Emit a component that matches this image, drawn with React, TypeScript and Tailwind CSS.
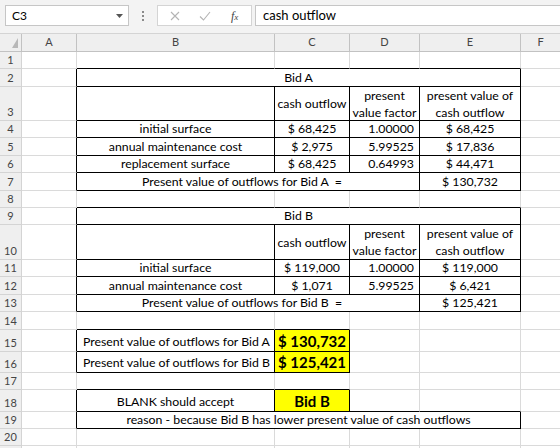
import type { ReactNode } from "react";

const A = "w-[55px]";
const B = "w-[198px]";
const C = "w-[75px]";
const D = "w-[70px]";
const E = "w-[101px]";
const BE = "w-[444px]";
const BD = "w-[343px]";

// right / bottom borders of a boxed range
const br = "border-r-black";
const bb = "border-b-black";
const box = "border-r-black border-b-black";

function Cell({
  w,
  className = "",
  align = "items-end pb-[1px]",
  children,
}: {
  w: string;
  className?: string;
  align?: string;
  children?: ReactNode;
}) {
  return (
    <div
      className={`flex shrink-0 overflow-hidden whitespace-nowrap border-r border-b border-[#dadada] leading-[15px] ${align} ${w} ${className}`}
    >
      {children}
    </div>
  );
}

function Row({ n, h, children }: { n?: number; h: string; children?: ReactNode }) {
  return (
    <div className={`flex ${h}`}>
      <div className="flex w-[22px] shrink-0 items-end justify-center border-r border-b border-[#d4d4d4] bg-[#efefef] pb-[1px] text-[11px] leading-[14px] text-[#444]">
        {n}
      </div>
      {children}
      <div className="flex-1 border-b border-[#dadada]" />
    </div>
  );
}

function TwoLine({ a, b }: { a: string; b: string }) {
  return (
    <div className="flex flex-col items-center leading-[17px]">
      <span>{a}</span>
      <span>{b}</span>
    </div>
  );
}

function BidHeader() {
  return (
    <>
      <Cell w={A} className={br} />
      <Cell w={B} className={box} />
      <Cell w={C} className={`${box} justify-center`} align="items-center">
        cash outflow
      </Cell>
      <Cell w={D} className={`${box} justify-center`} align="items-center">
        <TwoLine a="present" b="value factor" />
      </Cell>
      <Cell w={E} className={`${box} justify-center`} align="items-center">
        <TwoLine a="present value of" b="cash outflow" />
      </Cell>
    </>
  );
}

function DataRow({
  label,
  cash,
  factor,
  pv,
}: {
  label: string;
  cash: string;
  factor: string;
  pv: string;
}) {
  return (
    <>
      <Cell w={A} className={br} />
      <Cell w={B} className={`${box} justify-center`}>
        {label}
      </Cell>
      <Cell w={C} className={`${box} justify-center`}>
        {cash}
      </Cell>
      <Cell w={D} className={`${box} justify-end pr-[5px]`}>
        {factor}
      </Cell>
      <Cell w={E} className={`${box} justify-center`}>
        {pv}
      </Cell>
    </>
  );
}

function TopBorder({ cols }: { cols: string[] }) {
  return (
    <>
      <Cell w={A} />
      {[B, C, D, E].map((w) => (
        <Cell key={w} w={w} className={cols.includes(w) ? bb : ""} />
      ))}
    </>
  );
}

function FormulaBar() {
  return (
    <div className="flex h-[34px] items-start border-b border-[#d4d4d4] bg-[#f3f3f3] pt-[5px] pl-[5px]">
      <div className="flex h-[21px] w-[124px] items-center justify-between border border-[#c6c6c6] bg-white pr-[5px] pl-[6px] text-[12px] text-black">
        <span>C3</span>
        <svg width="7" height="4" viewBox="0 0 7 4" className="mt-[1px]">
          <path d="M0 0h7L3.5 4z" fill="#555" />
        </svg>
      </div>
      <div className="flex h-[21px] w-[28px] flex-col items-center justify-center gap-[2px]">
        <span className="h-[2px] w-[2px] bg-[#8a8a8a]" />
        <span className="h-[2px] w-[2px] bg-[#8a8a8a]" />
        <span className="h-[2px] w-[2px] bg-[#8a8a8a]" />
      </div>
      <div className="flex h-[21px] w-[95px] items-center border border-[#d4d4d4] bg-white">
        <svg width="10" height="10" viewBox="0 0 10 10" className="ml-[12px]">
          <path d="M1 1l8 8M9 1L1 9" stroke="#b4b4b4" strokeWidth="1.1" />
        </svg>
        <svg width="12" height="10" viewBox="0 0 12 10" className="ml-[19px]">
          <path d="M1 5.5l3.5 3.5L11 1" stroke="#b4b4b4" strokeWidth="1.1" fill="none" />
        </svg>
        <span className="ml-[20px] font-['Liberation_Serif'] text-[12px] italic text-[#444]">
          f<span className="text-[9px]">x</span>
        </span>
      </div>
      <div className="ml-[3px] flex h-[21px] flex-1 items-center border border-r-0 border-[#c6c6c6] bg-white pl-[7px] text-[13px] text-black">
        cash outflow
      </div>
    </div>
  );
}

function ColumnHeaders() {
  const cols: [string, string][] = [
    ["A", A],
    ["B", B],
    ["C", C],
    ["D", D],
    ["E", E],
  ];
  return (
    <div className="flex h-[18px] bg-[#efefef] text-[11px] text-[#444]">
      <div className="flex w-[22px] shrink-0 items-end justify-end border-r border-b border-[#c2c2c2] pr-[3px] pb-[3px]">
        <svg width="6" height="10" viewBox="0 0 6 10">
          <path d="M6 0V10H0z" fill="#b8b8b8" />
        </svg>
      </div>
      {cols.map(([l, w]) => (
        <div
          key={l}
          className={`flex shrink-0 items-center justify-center border-r border-b border-[#c2c2c2] ${w}`}
        >
          {l}
        </div>
      ))}
      <div className="flex flex-1 items-center justify-center border-b border-[#c2c2c2]">F</div>
    </div>
  );
}

export default function App() {
  const yellow = `${box} justify-center bg-[#ffff00] text-[15px] font-bold leading-[18px]`;
  return (
    <div className="h-[448px] w-[560px] overflow-hidden bg-white font-['Lato',sans-serif] text-[12.3px] text-black">
      <FormulaBar />
      <ColumnHeaders />

      <Row n={1} h="h-[17px]">
        <TopBorder cols={[B, C, D, E]} />
      </Row>
      <Row n={2} h="h-[18px]">
        <Cell w={A} className={br} />
        <Cell w={BE} className={`${box} justify-center`}>
          Bid A
        </Cell>
      </Row>
      <Row n={3} h="h-[34px]">
        <BidHeader />
      </Row>
      <Row n={4} h="h-[17px]">
        <DataRow label="initial surface" cash="$ 68,425" factor="1.00000" pv="$ 68,425" />
      </Row>
      <Row n={5} h="h-[18px]">
        <DataRow label="annual maintenance cost" cash="$ 2,975" factor="5.99525" pv="$ 17,836" />
      </Row>
      <Row n={6} h="h-[17px]">
        <DataRow label="replacement surface" cash="$ 68,425" factor="0.64993" pv="$ 44,471" />
      </Row>
      <Row n={7} h="h-[18px]">
        <Cell w={A} className={br} />
        <Cell w={BD} className={`${box} justify-center pr-[12px]`}>
          Present value of outflows for Bid A&nbsp; =
        </Cell>
        <Cell w={E} className={`${box} justify-center`}>
          $ 130,732
        </Cell>
      </Row>
      <Row n={8} h="h-[17px]">
        <TopBorder cols={[B, C, D, E]} />
      </Row>
      <Row n={9} h="h-[17px]">
        <Cell w={A} className={br} />
        <Cell w={BE} className={`${box} justify-center`}>
          Bid B
        </Cell>
      </Row>
      <Row n={10} h="h-[35px]">
        <BidHeader />
      </Row>
      <Row n={11} h="h-[17px]">
        <DataRow label="initial surface" cash="$ 119,000" factor="1.00000" pv="$ 119,000" />
      </Row>
      <Row n={12} h="h-[18px]">
        <DataRow label="annual maintenance cost" cash="$ 1,071" factor="5.99525" pv="$ 6,421" />
      </Row>
      <Row n={13} h="h-[17px]">
        <Cell w={A} className={br} />
        <Cell w={BD} className={`${box} justify-center pr-[12px]`}>
          Present value of outflows for Bid B&nbsp; =
        </Cell>
        <Cell w={E} className={`${box} justify-center`}>
          $ 125,421
        </Cell>
      </Row>
      <Row n={14} h="h-[18px]">
        <TopBorder cols={[B, C]} />
      </Row>
      <Row n={15} h="h-[22px]">
        <Cell w={A} className={br} />
        <Cell w={B} className={`${box} pl-[6px]`} align="items-end pb-[2px]">
          Present value of outflows for Bid A
        </Cell>
        <Cell w={C} className={yellow}>
          $ 130,732
        </Cell>
        <Cell w={D} />
        <Cell w={E} />
      </Row>
      <Row n={16} h="h-[21px]">
        <Cell w={A} className={br} />
        <Cell w={B} className={`${box} pl-[6px]`} align="items-end pb-[2px]">
          Present value of outflows for Bid B
        </Cell>
        <Cell w={C} className={yellow}>
          $ 125,421
        </Cell>
        <Cell w={D} />
        <Cell w={E} />
      </Row>
      <Row n={17} h="h-[17px]">
        <TopBorder cols={[B, C]} />
      </Row>
      <Row n={18} h="h-[22px]">
        <Cell w={A} className={br} />
        <Cell w={B} className={`${box} justify-center`} align="items-end pb-[2px]">
          BLANK should accept
        </Cell>
        <Cell w={C} className={yellow}>
          Bid B
        </Cell>
        <Cell w={D} className={bb} />
        <Cell w={E} className={bb} />
      </Row>
      <Row n={19} h="h-[17px]">
        <Cell w={A} className={br} />
        <Cell w={BE} className={`${box} justify-center`}>
          reason - because Bid B has lower present value of cash outflows
        </Cell>
      </Row>
      <Row n={20} h="h-[17px]">
        <TopBorder cols={[]} />
      </Row>
      <Row h="h-[17px]">
        <TopBorder cols={[]} />
      </Row>
    </div>
  );
}
